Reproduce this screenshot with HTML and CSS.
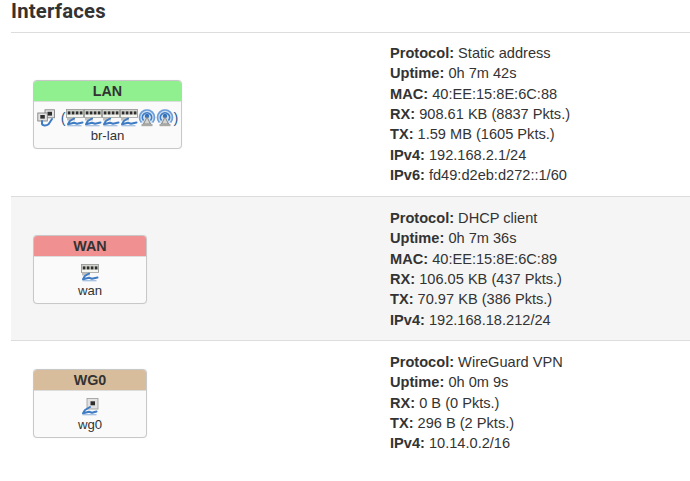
FILE: index.html
```html
<!DOCTYPE html>
<html lang="en">
<head>
<meta charset="utf-8">
<title>Interfaces</title>
<link rel="stylesheet" href="styles.css">
</head>
<body>
<svg class="defs" width="0" height="0" aria-hidden="true">
  <defs>
    <symbol id="eth" viewBox="0 0 18 18">
      <rect x="0.500" y="0.500" width="17" height="8" fill="#d2d2cc" stroke="#8f938f" stroke-width=".8"/>
      <rect x="1" y="5.800" width="16" height="2.400" fill="#f6f6f0"/>
      <g fill="#2e2e2e"><rect x="1.800" y="2.400" width="2.600" height="3"/><rect x="5.800" y="2.400" width="2.600" height="3"/><rect x="9.800" y="2.400" width="2.600" height="3"/><rect x="13.800" y="2.400" width="2.600" height="3"/></g>
      <path d="M1 9h8v2.500H1z" fill="#bdbdbd"/>
      <path d="M8 9.500 3.800 12 2 15.300 8 13.800 11 14.800 16.500 13.500" fill="none" stroke="#3f7cc4" stroke-width="2" stroke-linecap="round" stroke-linejoin="round"/>
      <path d="M1.500 16.800h14" stroke="#8db0d8" stroke-width="1.100"/>
    </symbol>
    <symbol id="bridge" viewBox="0 0 18 18">
      <rect x="8" y="0.800" width="9.500" height="8" fill="#e2e2e2" stroke="#777" stroke-width=".8"/>
      <rect x="10.500" y="2.800" width="4.500" height="3.800" fill="#2e2e2e"/>
      <rect x="0.800" y="4" width="9.500" height="8" fill="#e2e2e2" stroke="#777" stroke-width=".8"/>
      <rect x="3.300" y="6" width="4.500" height="3.600" fill="#2e2e2e"/>
      <path d="M5 12v2.500c0 2.200 4 2.700 6.500 .7L15 10" fill="none" stroke="#3f7cc4" stroke-width="2" stroke-linecap="round"/>
    </symbol>
    <symbol id="wifi" viewBox="0 0 18 18">
      <circle cx="9" cy="8" r="8" fill="#cfe0f3"/>
      <path d="M3.400 13.500a7.500 7.500 0 1 1 11.200 0" fill="none" stroke="#6f9fd8" stroke-width="1.700"/>
      <path d="M5.600 11.500a4.600 4.600 0 1 1 6.800 0" fill="none" stroke="#3f7cc4" stroke-width="1.700"/>
      <circle cx="9" cy="7" r="2.200" fill="#3672bb"/>
      <path d="M9 8 5.500 15h7z" fill="#d4d4d0" stroke="#7e7e7c" stroke-width=".9"/>
      <rect x="3.500" y="15" width="11" height="2.200" fill="#a8a8a4"/>
    </symbol>
    <symbol id="tunnel" viewBox="0 0 18 18">
      <rect x="6" y="0.500" width="11" height="10.500" fill="#e2e2e2" stroke="#999" stroke-width=".8"/>
      <rect x="9.500" y="3.300" width="4.500" height="4" fill="#2e2e2e"/>
      <path d="M9 9 4 12 2 15.300 8 13.800 11 14.800 15.500 13.500" fill="none" stroke="#3f7cc4" stroke-width="2" stroke-linecap="round" stroke-linejoin="round"/>
      <path d="M1.500 16.800h14" stroke="#8db0d8" stroke-width="1.100"/>
    </symbol>
  </defs>
</svg>
<main class="page">
  <h3 class="title">Interfaces</h3>
  <section class="table">
    <div class="row first-row">
      <div class="cell-box">
        <div class="ifbox">
          <div class="ifname lan">LAN</div>
          <div class="ifbody">
            <div class="icons">
              <svg class="icon"><use href="#bridge"/></svg>
              <span class="paren first">(</span>
              <svg class="icon"><use href="#eth"/></svg>
              <svg class="icon"><use href="#eth"/></svg>
              <svg class="icon"><use href="#eth"/></svg>
              <svg class="icon"><use href="#eth"/></svg>
              <svg class="icon"><use href="#wifi"/></svg>
              <svg class="icon"><use href="#wifi"/></svg>
              <span class="paren">)</span>
            </div>
            <div class="devname">br-lan</div>
          </div>
        </div>
      </div>
      <div class="info">
        <div><strong>Protocol:</strong> Static address</div>
        <div><strong>Uptime:</strong> 0h 7m 42s</div>
        <div><strong>MAC:</strong> 40:EE:15:8E:6C:88</div>
        <div><strong>RX:</strong> 908.61 KB (8837 Pkts.)</div>
        <div><strong>TX:</strong> 1.59 MB (1605 Pkts.)</div>
        <div><strong>IPv4:</strong> 192.168.2.1/24</div>
        <div><strong>IPv6:</strong> fd49:d2eb:d272::1/60</div>
      </div>
    </div>
    <div class="row alt">
      <div class="cell-box">
        <div class="ifbox small">
          <div class="ifname wan">WAN</div>
          <div class="ifbody">
            <div class="icons"><svg class="icon"><use href="#eth"/></svg></div>
            <div class="devname">wan</div>
          </div>
        </div>
      </div>
      <div class="info">
        <div><strong>Protocol:</strong> DHCP client</div>
        <div><strong>Uptime:</strong> 0h 7m 36s</div>
        <div><strong>MAC:</strong> 40:EE:15:8E:6C:89</div>
        <div><strong>RX:</strong> 106.05 KB (437 Pkts.)</div>
        <div><strong>TX:</strong> 70.97 KB (386 Pkts.)</div>
        <div><strong>IPv4:</strong> 192.168.18.212/24</div>
      </div>
    </div>
    <div class="row">
      <div class="cell-box">
        <div class="ifbox small">
          <div class="ifname wg">WG0</div>
          <div class="ifbody">
            <div class="icons"><svg class="icon"><use href="#tunnel"/></svg></div>
            <div class="devname">wg0</div>
          </div>
        </div>
      </div>
      <div class="info">
        <div><strong>Protocol:</strong> WireGuard VPN</div>
        <div><strong>Uptime:</strong> 0h 0m 9s</div>
        <div><strong>RX:</strong> 0 B (0 Pkts.)</div>
        <div><strong>TX:</strong> 296 B (2 Pkts.)</div>
        <div><strong>IPv4:</strong> 10.14.0.2/16</div>
      </div>
    </div>
  </section>
</main>
</body>
</html>
```
FILE: styles.css
```css
html, body {
  margin: 0;
  padding: 0;
  background: #fff;
  overflow: hidden;
}
body {
  font-family: "Liberation Sans", Arial, sans-serif;
  font-size: 14.6px;
  line-height: 20.35px;
  color: #333;
}
.defs {
  position: absolute;
}
.page {
  padding-left: 11px;
}
.title {
  margin: 0;
  height: 32px;
  font-family: Roboto, "Liberation Sans", sans-serif;
  font-size: 20.3px;
  font-weight: 700;
  line-height: 22px;
  letter-spacing: .2px;
  color: #333;
  border-bottom: 1px solid #ddd;
}
.row {
  display: flex;
  align-items: center;
  padding: 10.5px 0;
  border-bottom: 1px solid #ddd;
}
.first-row {
  padding: 10px 0 11px;
}
.row:last-child {
  border-bottom: 0;
}
.alt {
  background: #f5f5f5;
}
.cell-box {
  width: 379px;
  flex: none;
  padding: 1px 0 0 22px;
  box-sizing: border-box;
}
.info {
  flex: 1;
}
.info strong {
  font-weight: 700;
}
.ifbox {
  width: 149px;
  box-sizing: border-box;
  border: 1px solid #c8c8c8;
  border-radius: 4px;
  background: #fafafa;
  overflow: hidden;
  text-align: center;
  box-shadow: 0 0 1px #ddd;
}
.ifbox.small {
  width: 114px;
}
.ifname {
  height: 20px;
  line-height: 20px;
  font-size: 14.3px;
  font-weight: 700;
  border-bottom: 1px solid #ddd;
}
.lan { background: #90f090; }
.wan { background: #f09090; }
.wg { background: #d8bd9c; }
.ifbody {
  height: 46px;
  padding-top: 7px;
  box-sizing: border-box;
}
.icons {
  display: flex;
  justify-content: center;
  align-items: center;
  height: 18px;
  color: #2c5a8e;
}
.icon {
  width: 18px;
  height: 18px;
  flex: none;
}
.paren {
  font-size: 14.3px;
  line-height: 18px;
}
.paren.first {
  margin-left: 6px;
}
.devname {
  line-height: 18px;
  font-size: 13.2px;
}
```
